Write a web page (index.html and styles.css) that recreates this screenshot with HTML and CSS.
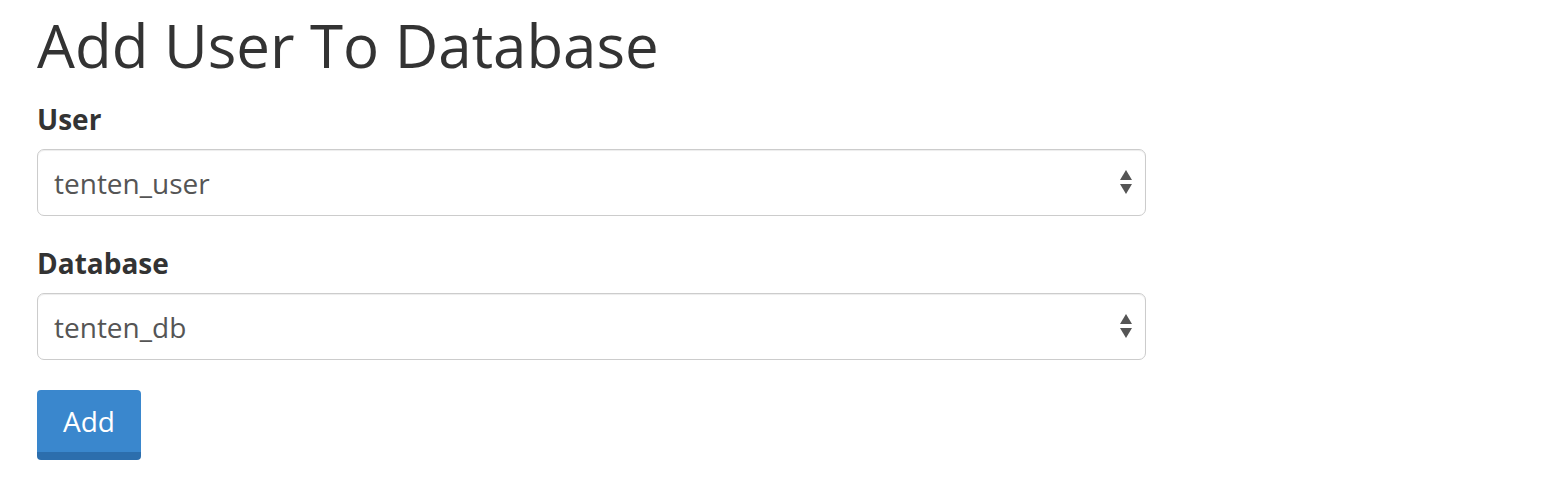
FILE: index.html
```
<!DOCTYPE html>
<html lang="en">
  <head>
    <meta charset="utf-8" />
    <title>Add User To Database</title>
    <link rel="stylesheet" href="styles.css">
  </head>
<body>

<div class="page">
  <h1>Add User To Database</h1>

  <form class="form">
    <div class="group">
      <label for="user">User</label>
      <div class="select-wrap">
        <select id="user">
          <option>tenten_user</option>
        </select>
        <svg class="arrows" width="14" height="26" viewBox="0 0 14 26">
          <path d="M7 1 L13 11 L1 11 Z" fill="#555" />
          <path d="M1 15 L13 15 L7 25 Z" fill="#555" />
        </svg>
      </div>
    </div>

    <div class="group">
      <label for="db">Database</label>
      <div class="select-wrap">
        <select id="db">
          <option>tenten_db</option>
        </select>
        <svg class="arrows" width="14" height="26" viewBox="0 0 14 26">
          <path d="M7 1 L13 11 L1 11 Z" fill="#555" />
          <path d="M1 15 L13 15 L7 25 Z" fill="#555" />
        </svg>
      </div>
    </div>

    <button type="button" class="btn">Add</button>
  </form>
</div>

</body>
</html>
```

FILE: styles.css
```
body {
    margin: 0;
    font-family: "Open Sans", sans-serif;
    color: #333;
    background: #fff;
}
.page {
    padding: 10px 37px;
}
h1 {
    font-size: 60px;
    font-weight: 400;
    margin: 2px 0 24px;
    line-height: 66px;
}
.group {
    margin-bottom: 30px;
}
label {
    display: block;
    font-size: 28px;
    font-weight: 700;
    line-height: 34px;
    margin-bottom: 13px;
}
.select-wrap {
    position: relative;
    width: 1109px;
}
select {
    -webkit-appearance: none;
    appearance: none;
    width: 100%;
    height: 67px;
    padding: 0 16px;
    font-family: "Open Sans", sans-serif;
    font-size: 28px;
    color: #555;
    background: #fff;
    border: 1px solid #ccc;
    border-radius: 7px;
    box-shadow: inset 0 1px 1px rgba(0, 0, 0, 0.075);
}
.arrows {
    position: absolute;
    right: 13px;
    top: 20px;
    pointer-events: none;
}
.btn {
    display: block;
    width: 104px;
    height: 70px;
    font-family: "Open Sans", sans-serif;
    font-size: 28px;
    color: #fff;
    background: #3a87cd;
    border: 0;
    border-bottom: 8px solid #2c6ead;
    border-radius: 4px;
    padding: 0;
}
```
